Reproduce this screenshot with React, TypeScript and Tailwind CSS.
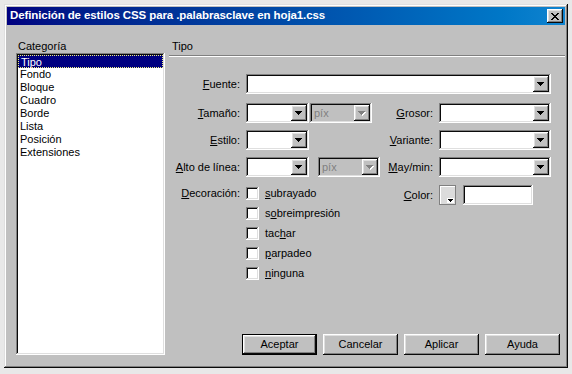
import React from 'react';

const raised =
  'shadow-[inset_-1px_-1px_#0a0a0a,inset_1px_1px_#ffffff,inset_-2px_-2px_#808080,inset_2px_2px_#dfdfdf]';
const sunken =
  'shadow-[inset_-1px_-1px_#ffffff,inset_1px_1px_#808080,inset_-2px_-2px_#dfdfdf,inset_2px_2px_#0a0a0a]';

const Arrow = ({ disabled = false }: { disabled?: boolean }) => (
  <svg width="8" height="5" viewBox="0 0 8 5" shapeRendering="crispEdges">
    {disabled && <polygon points="1,1 8,1 4.5,5" fill="#ffffff" />}
    <polygon points="0,0 7,0 3.5,4" fill={disabled ? '#808080' : '#000000'} />
  </svg>
);

// label with underlined access key
const Mn = ({ text, at }: { text: string; at: number }) => (
  <>
    {text.slice(0, at)}
    <span className="underline underline-offset-1">{text[at]}</span>
    {text.slice(at + 1)}
  </>
);

const Combo = ({ w, value, disabled = false }: { w?: string; value?: string; disabled?: boolean }) => (
  <div className={`flex h-[20px] p-[2px] ${sunken} ${disabled ? 'bg-[#c0c0c0]' : 'bg-white'} ${w ?? 'flex-1'}`}>
    <div className={`flex-1 pl-[2px] leading-[16px] ${disabled ? 'text-[#808080]' : ''}`}>{value}</div>
    <div className={`flex w-[16px] items-center justify-center bg-[#c0c0c0] ${raised}`}>
      <Arrow disabled={disabled} />
    </div>
  </div>
);

const Check = ({ children }: { children: React.ReactNode }) => (
  <div className="flex h-[20px] items-start pt-[3px]">
    <div className={`h-[13px] w-[13px] bg-white ${sunken}`} />
    <span className="ml-[6px] leading-[13px]">{children}</span>
  </div>
);

const Button = ({ label, primary = false }: { label: string; primary?: boolean }) => (
  <div className={`h-[21px] w-[75px] ${primary ? 'border border-black' : ''}`}>
    <div className={`flex h-full items-center justify-center bg-[#c0c0c0] ${raised}`}>{label}</div>
  </div>
);

const categories = ['Tipo', 'Fondo', 'Bloque', 'Cuadro', 'Borde', 'Lista', 'Posición', 'Extensiones'];

export default function App() {
  return (
    <div className="h-[374px] w-[572px] bg-[#e8e8e8] p-[4px] font-['Liberation_Sans',Arial,sans-serif] text-[11px] text-black">
      <div
        className={`flex h-[364px] w-[564px] flex-col bg-[#c0c0c0] p-[3px] shadow-[inset_-1px_-1px_#0a0a0a,inset_1px_1px_#dfdfdf,inset_-2px_-2px_#808080,inset_2px_2px_#ffffff]`}
      >
        {/* Title bar */}
        <div className="flex h-[18px] items-center bg-gradient-to-r from-[#000080] to-[#1084d0] pl-[3px] pr-[2px]">
          <span className="flex-1 text-[11.5px] font-bold tracking-[-0.1px] text-white">
            Definición de estilos CSS para .palabrasclave en hoja1.css
          </span>
          <div className={`flex h-[14px] w-[16px] items-center justify-center bg-[#c0c0c0] ${raised}`}>
            <svg width="8" height="7" viewBox="0 0 8 7" shapeRendering="crispEdges">
              <path
                d="M0 0h2v1H0zM6 0h2v1H6zM1 1h2v1H1zM5 1h2v1H5zM2 2h4v1H2zM3 3h2v1H3zM2 4h4v1H2zM1 5h2v1H1zM5 5h2v1H5zM0 6h2v1H0zM6 6h2v1H6z"
                fill="#000"
              />
            </svg>
          </div>
        </div>

        {/* Body */}
        <div className="flex flex-1 pb-[10px] pl-[9px] pt-[15px]">
          {/* Category list */}
          <div className="flex w-[149px] flex-col">
            <div className="h-[13px] pl-[2px] leading-[13px]">Categoría</div>
            <div className={`flex-1 bg-white p-[2px] ${sunken}`}>
              {categories.map((c, i) => (
                <div
                  key={c}
                  className={`h-[13px] pl-[2px] leading-[12px] ${
                    i === 0 ? 'border border-dotted border-[#f0f080] bg-[#000080] pl-[1px] text-white' : ''
                  }`}
                >
                  {c}
                </div>
              ))}
            </div>
          </div>

          {/* Tipo panel */}
          <div className="ml-[4px] flex flex-1 flex-col">
            <div className="h-[13px] pl-[3px] leading-[13px]">Tipo</div>
            <div className="mt-[2px] h-[2px] border-t border-b border-t-[#808080] border-b-white" />

            <div className="mt-[17px] flex flex-col pr-[14px]">
              <div className="flex h-[20px] items-center">
                <div className="w-[71px] text-right"><Mn text="Fuente:" at={0} /></div>
                <div className="ml-[6px] flex flex-1">
                  <Combo />
                </div>
              </div>

              <div className="mt-[9px] flex h-[20px] items-center">
                <div className="w-[71px] text-right"><Mn text="Tamaño:" at={0} /></div>
                <div className="ml-[6px] flex">
                  <Combo w="w-[63px]" />
                  <div className="ml-[1px]"><Combo w="w-[62px]" value="píx" disabled /></div>
                </div>
                <div className="flex-1 text-right"><Mn text="Grosor:" at={0} /></div>
                <div className="ml-[6px] flex w-[112px]"><Combo /></div>
              </div>

              <div className="mt-[7px] flex h-[20px] items-center">
                <div className="w-[71px] text-right"><Mn text="Estilo:" at={0} /></div>
                <div className="ml-[6px] flex"><Combo w="w-[63px]" /></div>
                <div className="flex-1 text-right"><Mn text="Variante:" at={0} /></div>
                <div className="ml-[6px] flex w-[112px]"><Combo /></div>
              </div>

              <div className="mt-[7px] flex h-[20px] items-center">
                <div className="w-[71px] text-right"><Mn text="Alto de línea:" at={0} /></div>
                <div className="ml-[6px] flex">
                  <Combo w="w-[63px]" />
                  <div className="ml-[9px]"><Combo w="w-[62px]" value="píx" disabled /></div>
                </div>
                <div className="flex-1 text-right"><Mn text="May/min:" at={0} /></div>
                <div className="ml-[6px] flex w-[112px]"><Combo /></div>
              </div>

              <div className="mt-[7px] flex">
                <div className="w-[71px] pt-[3px] text-right leading-[13px]"><Mn text="Decoración:" at={0} /></div>
                <div className="ml-[6px] flex flex-col">
                  <Check><Mn text="subrayado" at={0} /></Check>
                  <Check><Mn text="sobreimpresión" at={1} /></Check>
                  <Check><Mn text="tachar" at={3} /></Check>
                  <Check><Mn text="parpadeo" at={0} /></Check>
                  <Check><Mn text="ninguna" at={0} /></Check>
                </div>
                <div className="flex flex-1 items-start">
                  <div className="flex-1 pt-[5px] text-right leading-[13px]"><Mn text="Color:" at={0} /></div>
                  <div className="ml-[6px] mt-[1px] flex w-[112px]">
                    <div className="relative h-[20px] w-[17px] border border-[#808080] bg-[#dcdcdc] shadow-[inset_1px_1px_#ffffff]">
                      <div className="absolute bottom-[1px] right-[1px] flex h-[5px] w-[7px] items-center justify-center bg-white">
                        <svg width="5" height="3" viewBox="0 0 5 3" shapeRendering="crispEdges">
                          <polygon points="0,0 5,0 2.5,3" fill="#000" />
                        </svg>
                      </div>
                    </div>
                    <div className={`ml-[7px] h-[20px] w-[70px] bg-white ${sunken}`} />
                  </div>
                </div>
              </div>
            </div>

            <div className="mt-auto flex justify-end gap-[6px] pr-[5px]">
              <Button label="Aceptar" primary />
              <Button label="Cancelar" />
              <Button label="Aplicar" />
              <Button label="Ayuda" />
            </div>
          </div>
        </div>
      </div>
    </div>
  );
}
